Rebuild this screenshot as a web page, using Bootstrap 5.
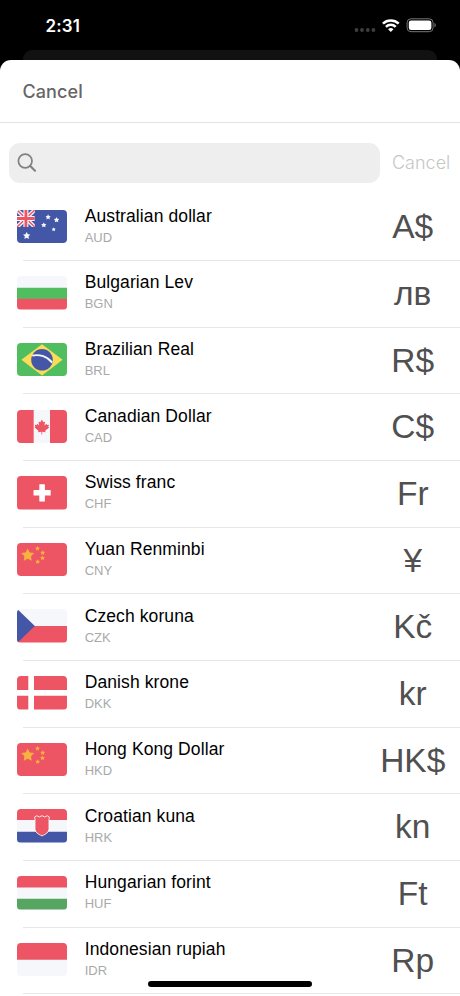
<!DOCTYPE html>
<html lang="en">
<head>
<meta charset="utf-8">
<meta name="viewport" content="width=device-width, initial-scale=1">
<title>Choose currency</title>
<link href="https://cdn.jsdelivr.net/npm/bootstrap@5.3.0/dist/css/bootstrap.min.css" rel="stylesheet">
<style>
  body { background: #000; font-family: "Liberation Sans", Arial, sans-serif; height: 996px; overflow: hidden; }
  .phone { width: 460px; height: 996px; overflow: hidden; }
  .statusbar { height: 49.5px; padding: 0 24px 0 45.5px; font-family: Inter, sans-serif; }
  .clock { font-size: 17px; font-weight: 600; line-height: 20px; margin-top: 16px; letter-spacing: .1px; }
  .status-icons { margin-top: 17px; }
  .back-sheet { height: 10.5px; margin: 0 23px; background: #111; border-radius: 9px 9px 0 0; }
  .sheet { height: 936px; border-radius: 11px 11px 0 0; background: #fff; }
  .sheet-head { height: 63px; padding: 2px 0 0 22.5px; border-bottom: 1px solid #e3e3e3; }
  .head-cancel { font: 500 18px/22px Inter, sans-serif; color: #666; letter-spacing: .1px; }
  .search-row { height: 71px; padding: 19.5px 9px 0; }
  .search-box { width: 371px; height: 40px; background: #eee; border-radius: 11px; padding-left: 8px; }
  .search-side { height: 40px; }
  .search-cancel { font: 300 18px/22px Inter, sans-serif; color: #c6c6c6; margin-left: 12px; }
  .currency { height: 66.667px; padding-left: 17px; }
  .currency::after { content: ""; position: absolute; left: 23px; right: 0; bottom: -.5px; height: 1px; background: #e6e6e6; }
  .flag { width: 50px; height: 33.6px; border-radius: 4px; margin-top: -2px; }
  .labels { margin-left: 17.7px; margin-top: -2px; }
  .title { font-size: 17.5px; line-height: 22px; color: #000; letter-spacing: .1px; }
  .code { font-size: 13px; line-height: 21px; color: #a9a9a9; }
  .symbol-col { width: 94.5px; font-size: 33.5px; line-height: 40px; color: #505050; }
  .home-bar { left: 148px; top: 981px; width: 164px; height: 5.5px; background: #000; }
</style>
</head>
<body>
<svg width="0" height="0" class="position-absolute" aria-hidden="true">
  <symbol id="star" viewBox="-10 -10 20 20"><path d="M0-10 3-4 9.7-3.1 4.9 1.600 6 8.400 0 5.200-6 8.400-4.900 1.600-9.700-3.100-3-4Z"/></symbol>
  <symbol id="red-stars" viewBox="0 0 50 33.6">
    <path fill="#ee5564" d="M0 0h50v33.6H0z"/>
    <g fill="#f8b13c">
      <use href="#star" x="4" y="5.5" width="13.4" height="13.4"/>
      <use href="#star" x="18" y="3" width="5" height="5"/>
      <use href="#star" x="23.2" y="7.3" width="5" height="5"/>
      <use href="#star" x="23" y="12.5" width="5" height="5"/>
      <use href="#star" x="18.2" y="16.2" width="5" height="5"/>
    </g>
  </symbol>
</svg>
<div class="phone position-relative">
  <header class="statusbar d-flex justify-content-between align-items-start text-white">
    <span class="clock">2:31</span>
    <svg class="status-icons" width="82" height="18" viewBox="0 0 82 18">
      <g fill="#3e3e3e"><circle cx="2.5" cy="13" r="1.9"/><circle cx="8" cy="13" r="1.9"/><circle cx="13.8" cy="13" r="1.9"/><circle cx="19.4" cy="13" r="1.9"/></g>
      <g transform="translate(36.8 14.8)" fill="none" stroke="#fff" stroke-width="2.5">
        <path d="M-7.9-8.2A11.6 11.6 0 0 1 7.9-8.2"/>
        <path d="M-4.9-5A7.1 7.1 0 0 1 4.9-5"/>
        <path fill="#fff" stroke="none" d="M0 .3-2.7-2.5A3.9 3.9 0 0 1 2.7-2.5Z"/>
      </g>
      <rect x="53.1" y="1.8" width="26" height="12.9" rx="3.9" fill="none" stroke="#777"/>
      <rect x="54.8" y="3.4" width="22.6" height="9.7" rx="2.3" fill="#fff"/>
      <path d="M80.5 6.1v4.2c1.7-.7 1.7-3.5 0-4.2Z" fill="#777"/>
    </svg>
  </header>
  <div class="back-sheet"></div>
  <main class="sheet">
    <div class="sheet-head d-flex align-items-center"><span class="head-cancel">Cancel</span></div>
    <div class="search-row d-flex align-items-start">
      <div class="search-box d-flex align-items-center flex-shrink-0">
        <svg width="20" height="20" viewBox="0 0 20 20" fill="none" stroke="#828282"><circle cx="8.2" cy="8" r="6.8" stroke-width="1.7"/><path d="m13 12.800 5 4.900" stroke-width="2.100" stroke-linecap="round"/></svg>
      </div>
      <div class="search-side d-flex align-items-center"><span class="search-cancel">Cancel</span></div>
    </div>
    <div class="currencies">
      <div class="currency position-relative d-flex align-items-center">
        <svg class="flag" viewBox="0 0 50 33.6">
          <path fill="#4456a6" d="M0 0h50v33.6H0z"/>
          <svg width="17.8" height="17" viewBox="0 0 17.8 17">
            <path d="m0 0 17.8 17m0-17L0 17" stroke="#f5f7fb" stroke-width="4"/>
            <path d="m0 0 17.8 17m0-17L0 17" stroke="#ee5564" stroke-width="1.5"/>
            <path d="M8.9 0v17M0 8.5h17.8" stroke="#f5f7fb" stroke-width="5"/>
            <path d="M8.9 0v17M0 8.5h17.8" stroke="#ee5564" stroke-width="2.800"/>
          </svg>
          <g fill="#f5f7fb">
            <use href="#star" x="5.9" y="21.9" width="7.6" height="7.6"/>
            <use href="#star" x="28.3" y="4.300" width="5.600" height="5.600"/>
            <use href="#star" x="36.700" y="7.100" width="5.700" height="5.700"/>
            <use href="#star" x="24" y="12.200" width="5.600" height="5.600"/>
            <use href="#star" x="34.500" y="17.200" width="4.400" height="4.400"/>
          </g>
        </svg>
        <div class="labels flex-grow-1"><div class="title">Australian dollar</div><div class="code">AUD</div></div>
        <div class="symbol-col text-center">A$</div>
      </div>
      <div class="currency position-relative d-flex align-items-center">
        <svg class="flag" viewBox="0 0 50 33.6"><path fill="#f5f7fb" d="M0 0h50v12H0z"/><path fill="#50be5f" d="M0 11.7h50v11.5H0z"/><path fill="#ee5564" d="M0 22.8h50v10.8H0z"/></svg>
        <div class="labels flex-grow-1"><div class="title">Bulgarian Lev</div><div class="code">BGN</div></div>
        <div class="symbol-col text-center">лв</div>
      </div>
      <div class="currency position-relative d-flex align-items-center">
        <svg class="flag" viewBox="0 0 50 33.6"><path fill="#50be5f" d="M0 0h50v33.6H0z"/><path fill="#fadc59" d="M25 1.2 45.6 16.8 25 32.4 4.4 16.8Z"/><circle cx="25" cy="16.8" r="10.8" fill="#4456a6"/><path d="M15.200 12.600C22.500 11 30.500 13.500 35.200 19.600" fill="none" stroke="#f5f7fb" stroke-width="1.800"/></svg>
        <div class="labels flex-grow-1"><div class="title">Brazilian Real</div><div class="code">BRL</div></div>
        <div class="symbol-col text-center">R$</div>
      </div>
      <div class="currency position-relative d-flex align-items-center">
        <svg class="flag" viewBox="0 0 50 33.6"><path fill="#f5f7fb" d="M0 0h50v33.600H0z"/><path fill="#ee5564" d="M0 0h16.700v33.600H0zM33 0h17v33.600H33zM24.900 9.600l1.500 2.700 1.700-.800-.600 4 2-1.700.500 1.200 2-.200-.700 2 .900.700-4 3.200.400 1.500-3.400-.400v2.600h-.800v-2.600l-3.300.400.400-1.500-4-3.200.900-.700-.700-2 2 .200.500-1.200 2 1.700-.700-4 1.800.800Z"/></svg>
        <div class="labels flex-grow-1"><div class="title">Canadian Dollar</div><div class="code">CAD</div></div>
        <div class="symbol-col text-center">C$</div>
      </div>
      <div class="currency position-relative d-flex align-items-center">
        <svg class="flag" viewBox="0 0 50 33.6"><path fill="#ee5564" d="M0 0h50v33.600H0z"/><path fill="#fff" d="M22.800 8.200h4.600a.5.5 0 0 1 .5.5v5.300h5.300a.5.5 0 0 1 .5.500v4.600a.5.5 0 0 1-.5.500h-5.300v5.300a.5.5 0 0 1-.5.500h-4.600a.5.5 0 0 1-.5-.500v-5.300h-5.300a.5.5 0 0 1-.5-.500v-4.600a.5.5 0 0 1 .5-.500h5.300v-5.300a.5.5 0 0 1 .5-.500z"/></svg>
        <div class="labels flex-grow-1"><div class="title">Swiss franc</div><div class="code">CHF</div></div>
        <div class="symbol-col text-center">Fr</div>
      </div>
      <div class="currency position-relative d-flex align-items-center">
        <svg class="flag" viewBox="0 0 50 33.6"><use href="#red-stars" width="50" height="33.6"/></svg>
        <div class="labels flex-grow-1"><div class="title">Yuan Renminbi</div><div class="code">CNY</div></div>
        <div class="symbol-col text-center">¥</div>
      </div>
      <div class="currency position-relative d-flex align-items-center">
        <svg class="flag" viewBox="0 0 50 33.6"><path fill="#f5f7fb" d="M0 0h50v17H0z"/><path fill="#ee5564" d="M0 17h50v16.600H0z"/><path fill="#4456a6" d="M0 1v31.600l1 .600L17.800 17 1 .800Z"/></svg>
        <div class="labels flex-grow-1"><div class="title">Czech koruna</div><div class="code">CZK</div></div>
        <div class="symbol-col text-center">Kč</div>
      </div>
      <div class="currency position-relative d-flex align-items-center">
        <svg class="flag" viewBox="0 0 50 33.6"><path fill="#ee5564" d="M0 0h11.300v14H0zM17 0h33v14H17zM0 19.700h11.300v13.900H0zM17 19.700h33v13.900H17z"/></svg>
        <div class="labels flex-grow-1"><div class="title">Danish krone</div><div class="code">DKK</div></div>
        <div class="symbol-col text-center">kr</div>
      </div>
      <div class="currency position-relative d-flex align-items-center">
        <svg class="flag" viewBox="0 0 50 33.6"><use href="#red-stars" width="50" height="33.6"/></svg>
        <div class="labels flex-grow-1"><div class="title">Hong Kong Dollar</div><div class="code">HKD</div></div>
        <div class="symbol-col text-center">HK$</div>
      </div>
      <div class="currency position-relative d-flex align-items-center">
        <svg class="flag" viewBox="0 0 50 33.6"><path fill="#f5f7fb" d="M0 0h50v33.600H0z"/><path fill="#ee5564" d="M0 0h50v11H0z"/><path fill="#4456a6" d="M0 22.700h50v10.900H0z"/><path d="M17.600 8 19.800 6.700 22.300 8 25 6.700 27.700 8 30.200 6.700 32.400 8l-.4 2.200v9.200c0 4-3.200 5.800-7 7.500-3.800-1.700-7-3.500-7-7.500v-9.200Z" fill="#ee5564" stroke="#f5f7fb" stroke-width=".9"/></svg>
        <div class="labels flex-grow-1"><div class="title">Croatian kuna</div><div class="code">HRK</div></div>
        <div class="symbol-col text-center">kn</div>
      </div>
      <div class="currency position-relative d-flex align-items-center">
        <svg class="flag" viewBox="0 0 50 33.6"><path fill="#f5f7fb" d="M0 0h50v33.600H0z"/><path fill="#ee5564" d="M0 0h50v11.500H0z"/><path fill="#56a661" d="M0 22.700h50v10.900H0z"/></svg>
        <div class="labels flex-grow-1"><div class="title">Hungarian forint</div><div class="code">HUF</div></div>
        <div class="symbol-col text-center">Ft</div>
      </div>
      <div class="currency position-relative d-flex align-items-center">
        <svg class="flag" viewBox="0 0 50 33.6"><path fill="#f5f7fb" d="M0 0h50v33.600H0z"/><path fill="#ee5564" d="M0 0h50v16.700H0z"/></svg>
        <div class="labels flex-grow-1"><div class="title">Indonesian rupiah</div><div class="code">IDR</div></div>
        <div class="symbol-col text-center">Rp</div>
      </div>
    </div>
  </main>
  <div class="home-bar position-absolute rounded-pill"></div>
</div>
<script src="https://cdn.jsdelivr.net/npm/bootstrap@5.3.0/dist/js/bootstrap.bundle.min.js"></script>
</body>
</html>
